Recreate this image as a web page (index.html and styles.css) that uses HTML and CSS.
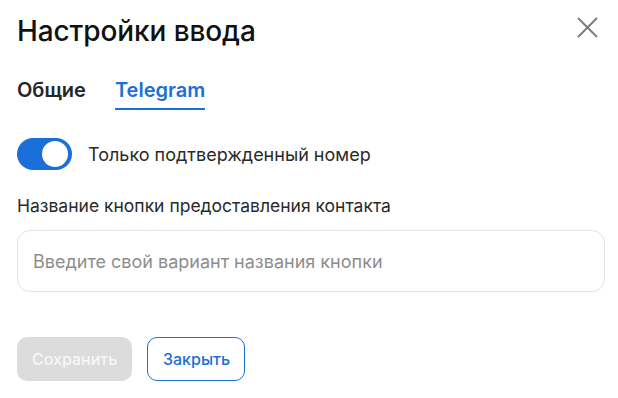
FILE: index.html
```html
<!DOCTYPE html>
<html lang="ru">
<head>
<meta charset="utf-8">
<link rel="stylesheet" href="styles.css">
</head>
<body>
<div class="modal">
  <div class="header">
    <h1 class="title">Настройки ввода</h1>
    <button class="close" aria-label="Закрыть">
      <svg width="21" height="21" viewBox="0 0 21 21"><path d="M1 1L20 20M20 1L1 20" stroke="#7a7a7a" stroke-width="1.8" fill="none"/></svg>
    </button>
  </div>
  <div class="tabs">
    <div class="tab">Общие</div>
    <div class="tab active">Telegram</div>
  </div>
  <div class="toggle-row">
    <div class="toggle"><div class="knob"></div></div>
    <span class="toggle-label">Только подтвержденный номер</span>
  </div>
  <div class="field-label">Название кнопки предоставления контакта</div>
  <div class="input">Введите свой вариант названия кнопки</div>
  <div class="actions">
    <button class="btn btn-disabled">Сохранить</button>
    <button class="btn btn-outline">Закрыть</button>
  </div>
</div>
</body>
</html>
```
FILE: styles.css
```css
* { box-sizing: border-box; }
html, body { margin: 0; padding: 0; background: #fff; }
body { font-family: Inter, "Noto Sans", sans-serif; color: #1c1c1c; }
.modal { width: 618px; height: 398px; padding: 13px 13px 0 17px; }
.header { display: flex; justify-content: space-between; align-items: flex-start; }
.title { margin: 0; font-size: 28px; font-weight: 500; line-height: 36px; color: #111; letter-spacing: -0.1px; }
.close { background: none; border: 0; padding: 0; margin: 4px 7px 0 0; width: 21px; height: 21px; cursor: pointer; }
.close svg { display: block; }
.tabs { display: flex; gap: 29px; margin-top: 28px; }
.tab { font-size: 20px; font-weight: 600; line-height: 26px; padding-bottom: 5px; color: #262626; border-bottom: 2px solid transparent; }
.tab.active { color: #1a6fd9; border-bottom-color: #1a6fd9; }
.toggle-row { display: flex; align-items: center; gap: 16px; margin-top: 28px; }
.toggle { width: 55px; height: 32px; border-radius: 16px; background: #1a6fd9; position: relative; }
.knob { position: absolute; top: 3px; right: 4px; width: 26px; height: 26px; border-radius: 50%; background: #fff; }
.toggle-label { font-size: 18px; color: #2a2a2a; }
.field-label { margin-top: 25px; font-size: 17.5px; color: #2a2a2a; line-height: 22px; }
.input { margin-top: 13px; height: 62px; border: 1.5px solid #e3e3e3; border-radius: 13px; padding: 0 15px; display: flex; align-items: center; font-size: 18px; color: #8d8d8d; }
.actions { display: flex; gap: 15px; margin-top: 45px; }
.btn { height: 44px; border-radius: 10px; font-family: Inter, "Noto Sans", sans-serif; font-size: 16px; font-weight: 500; padding: 0 15px; }
.btn-disabled { width: 115px; background: #dcdcdc; border: 0; color: #f7f7f7; }
.btn-outline { width: 98px; background: #fff; border: 1px solid #1a6fd9; color: #1a6fd9; }
```
